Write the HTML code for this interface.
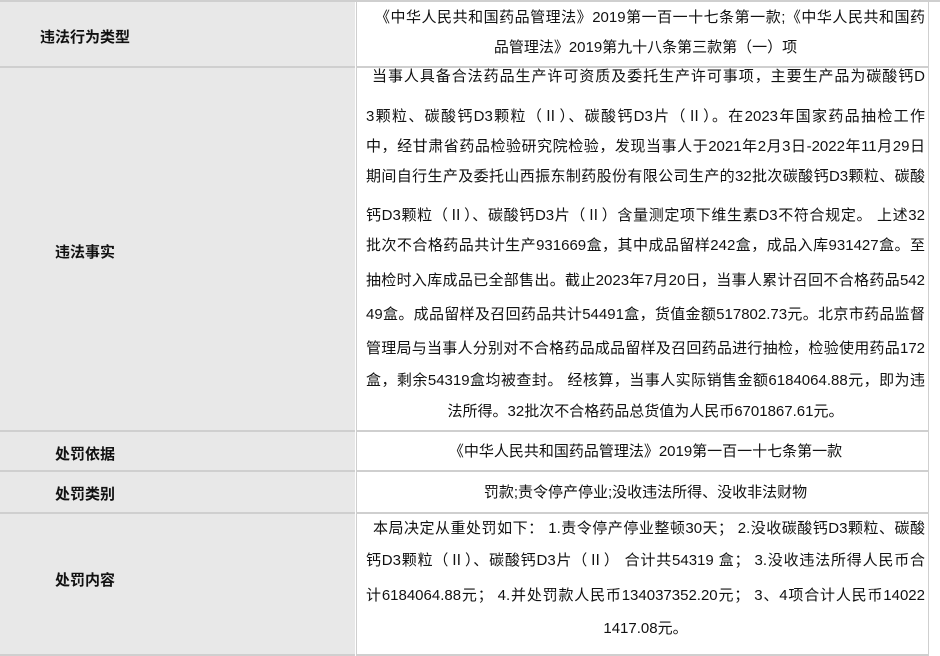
<!DOCTYPE html>
<html><head><meta charset="utf-8"><style>
body{margin:0;width:940px;height:645px;overflow:hidden;background:#fff;font-family:"Liberation Sans","Noto Sans CJK SC",sans-serif;font-size:15px;color:#111;position:relative}
.l{position:absolute;left:0;width:355px;background:#e8e8e8;border-bottom:2px solid #cfcfcf}
.r{position:absolute;left:356px;width:571px;border-left:1px solid #cfcfcf;border-right:1px solid #cfcfcf;border-bottom:2px solid #cfcfcf;background:#fff}
.lb{position:absolute;font-weight:bold;font-size:15px;line-height:20px}
.t{position:absolute;left:366px;width:559px;line-height:20px;height:20px;overflow:hidden;white-space:nowrap}
.j{text-align:justify;text-align-last:justify;white-space:normal}
.c{text-align:center}
</style></head><body>
<div style="position:absolute;left:0;top:0;width:940px;height:2px;background:#cfcfcf"></div>
<div class="l" style="top:2px;height:64px"></div><div class="r" style="top:2px;height:64px"></div>
<div class="l" style="top:68px;height:362px"></div><div class="r" style="top:68px;height:362px"></div>
<div class="l" style="top:432px;height:38px"></div><div class="r" style="top:432px;height:38px"></div>
<div class="l" style="top:472px;height:40px"></div><div class="r" style="top:472px;height:40px"></div>
<div class="l" style="top:514px;height:140px"></div><div class="r" style="top:514px;height:140px"></div>

<div class="lb" style="left:40px;top:28px">违法行为类型</div>
<div class="lb" style="left:55px;top:243px">违法事实</div>
<div class="lb" style="left:55px;top:445px">处罚依据</div>
<div class="lb" style="left:55px;top:485px">处罚类别</div>
<div class="lb" style="left:55px;top:571px">处罚内容</div>

<div class="t j" style="top:8px;left:375px;width:550px">《中华人民共和国药品管理法》2019第一百一十七条第一款;《中华人民共和国药</div>
<div class="t c" style="top:38px">品管理法》2019第九十八条第三款第（一）项</div>

<div class="t j" style="top:67px;left:372px;width:553px">当事人具备合法药品生产许可资质及委托生产许可事项，主要生产品为碳酸钙D</div>
<div class="t j" style="top:107px">3颗粒、碳酸钙D3颗粒（Ⅱ）、碳酸钙D3片（Ⅱ）。在2023年国家药品抽检工作</div>
<div class="t j" style="top:137px">中，经甘肃省药品检验研究院检验，发现当事人于2021年2月3日-2022年11月29日</div>
<div class="t j" style="top:167px">期间自行生产及委托山西振东制药股份有限公司生产的32批次碳酸钙D3颗粒、碳酸</div>
<div class="t j" style="top:206px">钙D3颗粒（Ⅱ）、碳酸钙D3片（Ⅱ）含量测定项下维生素D3不符合规定。 上述32</div>
<div class="t j" style="top:236px">批次不合格药品共计生产931669盒，其中成品留样242盒，成品入库931427盒。至</div>
<div class="t j" style="top:271px">抽检时入库成品已全部售出。截止2023年7月20日，当事人累计召回不合格药品542</div>
<div class="t j" style="top:305px">49盒。成品留样及召回药品共计54491盒，货值金额517802.73元。北京市药品监督</div>
<div class="t j" style="top:339px">管理局与当事人分别对不合格药品成品留样及召回药品进行抽检，检验使用药品172</div>
<div class="t j" style="top:371px">盒，剩余54319盒均被查封。 经核算，当事人实际销售金额6184064.88元，即为违</div>
<div class="t c" style="top:402px">法所得。32批次不合格药品总货值为人民币6701867.61元。</div>

<div class="t c" style="top:442px">《中华人民共和国药品管理法》2019第一百一十七条第一款</div>
<div class="t c" style="top:483px">罚款;责令停产停业;没收违法所得、没收非法财物</div>

<div class="t j" style="top:519px;left:373px;width:552px">本局决定从重处罚如下： 1.责令停产停业整顿30天； 2.没收碳酸钙D3颗粒、碳酸</div>
<div class="t j" style="top:551px">钙D3颗粒（Ⅱ）、碳酸钙D3片（Ⅱ） 合计共54319 盒； 3.没收违法所得人民币合</div>
<div class="t j" style="top:586px">计6184064.88元； 4.并处罚款人民币134037352.20元； 3、4项合计人民币14022</div>
<div class="t c" style="top:619px">1417.08元。</div>
</body></html>
